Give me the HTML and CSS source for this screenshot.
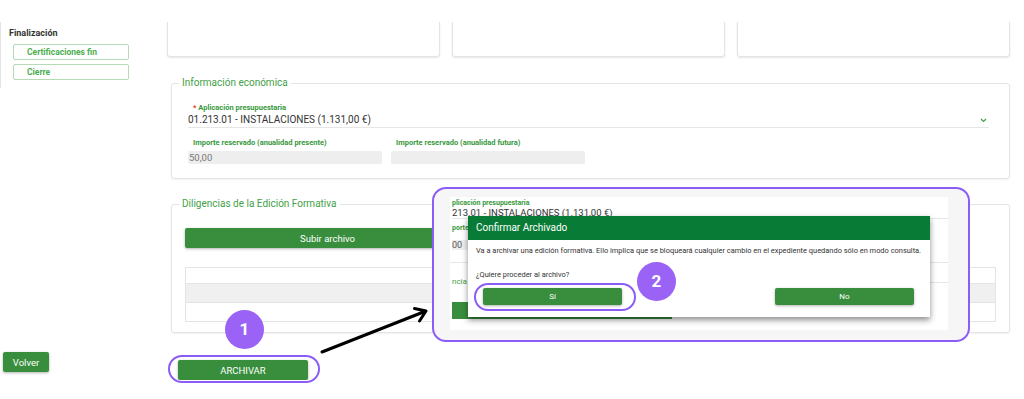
FILE: index.html
```html
<!DOCTYPE html>
<html lang="es">
<head>
    <meta charset="UTF-8">
    <meta name="viewport" content="width=device-width, initial-scale=1.0">
    <title>Archivar edición formativa</title>
    <link rel="stylesheet" href="styles.css">
</head>
<body>

<div class="page">
    <aside class="sidebar">
        <div class="side-group">
            <h4 class="side-title">Finalización</h4>
            <a class="side-link">Certificaciones fin</a>
            <a class="side-link">Cierre</a>
        </div>
        <button class="btn btn-back">Volver</button>
    </aside>

    <main class="content">
        <div class="cards">
            <div class="card"></div>
            <div class="card"></div>
            <div class="card"></div>
        </div>

        <fieldset class="panel">
            <legend>Información económica</legend>
            <div class="panel-body panel-eco">
                <div class="field">
                    <label class="field-label"><span class="req">*</span> Aplicación presupuestaria</label>
                    <div class="select-value">
                        <span>01.213.01 - INSTALACIONES (1.131,00 €)</span>
                        <svg class="chevron" width="7" height="5" viewBox="0 0 7 5"><path d="M1 1l2.5 2.5L6 1" fill="none" stroke="#43a047" stroke-width="1.2"/></svg>
                    </div>
                </div>
                <div class="field-row">
                    <div class="field">
                        <label class="field-label">Importe reservado (anualidad presente)</label>
                        <div class="input-ro">50,00</div>
                    </div>
                    <div class="field">
                        <label class="field-label">Importe reservado (anualidad futura)</label>
                        <div class="input-ro"></div>
                    </div>
                </div>
            </div>
        </fieldset>

        <fieldset class="panel">
            <legend>Diligencias de la Edición Formativa</legend>
            <div class="panel-body panel-docs">
                <button class="btn btn-upload">Subir archivo</button>
                <div class="doc-table">
                    <div class="doc-row"></div>
                    <div class="doc-row odd"></div>
                    <div class="doc-row"></div>
                </div>
            </div>
        </fieldset>

        <button class="btn btn-archive">ARCHIVAR</button>
    </main>
</div>

<!-- anotaciones del tutorial -->
<div class="zoom-box">
    <div class="shot">
        <div class="shot-block">
            <div class="shot-label">plicación presupuestaria</div>
            <div class="shot-value">213.01 - INSTALACIONES (1.131,00 €)</div>
            <div class="shot-label second">porte</div>
            <div class="shot-input">00</div>
        </div>
        <div class="shot-legend"><span>ncia</span><i></i></div>
        <div class="shot-btn"></div>
    </div>

    <div class="dialog">
        <div class="dialog-head">Confirmar Archivado</div>
        <div class="dialog-body">
            <p>Va a archivar una edición formativa. Ello implica que se bloqueará cualquier cambio en el expediente quedando sólo en modo consulta.</p>
            <p class="ask">¿Quiere proceder al archivo?</p>
            <div class="dialog-actions">
                <button class="btn btn-dialog">Sí</button>
                <button class="btn btn-dialog">No</button>
            </div>
        </div>
    </div>
</div>

<div class="ring ring-archive"></div>
<div class="ring ring-yes"></div>
<div class="step step-1">1</div>
<div class="step step-2">2</div>

<svg class="arrow" width="120" height="60" viewBox="0 0 120 60">
    <path d="M7 52L111 11M99.5 8.5L111 11L104.5 21" fill="none" stroke="#000" stroke-width="3" stroke-linecap="round" stroke-linejoin="round"/>
</svg>

</body>
</html>
```

FILE: styles.css
```css
/* Alap */
body {
    margin: 0;
    font-family: Roboto, "Liberation Sans", sans-serif;
    background-color: #fff;
    color: #333;
    overflow: hidden;
}

.page {
    display: flex;
}

button {
    font-family: inherit;
    cursor: pointer;
}

/* Menú lateral */
.sidebar {
    width: 167px;
    flex-shrink: 0;
}

.side-group {
    margin-top: 22px;
    height: 66px;
    border-left: 1px solid #e4e4e4;
    padding: 6px 0 0 8px;
    box-sizing: border-box;
}

.side-title {
    margin: 0 0 5px;
    font-size: 9px;
    line-height: 11px;
    font-weight: bold;
    color: #333;
}

.side-link {
    display: block;
    width: 116px;
    height: 16px;
    box-sizing: border-box;
    margin: 0 0 4px 4px;
    padding-left: 13px;
    border: 1px solid #b5dcb7;
    border-radius: 2px;
    font-size: 8.5px;
    line-height: 14px;
    font-weight: bold;
    color: #4caf50;
}

.btn {
    border: none;
    border-radius: 2px;
    background-color: #388e3c;
    color: #fff;
    font-size: 9.5px;
    padding: 0;
    box-shadow: 0 1px 3px rgba(0, 0, 0, 0.3);
}

.btn-back {
    display: block;
    margin: 264px 0 0 3px;
    width: 46px;
    height: 20px;
}

/* Contenido */
.content {
    width: 843px;
    padding-top: 22px;
}

.cards {
    display: grid;
    grid-template-columns: repeat(3, 1fr);
    gap: 12px;
}

.card {
    height: 34px;
    border: 1px solid #e4e4e4;
    border-top: none;
    border-radius: 0 0 3px 3px;
    box-shadow: 0 1px 2px rgba(0, 0, 0, 0.1);
}

.panel {
    margin: 20px 0 0 4px;
    padding: 0;
    min-width: 0;
    border: 1px solid #e4e4e4;
    border-radius: 3px;
    box-shadow: 0 1px 2px rgba(0, 0, 0, 0.06);
}

.panel + .panel {
    margin-top: 19px;
}

.panel legend {
    margin-left: 7px;
    padding: 0 3px;
    font-size: 10px;
    line-height: 12px;
    color: #43a047;
}

.panel-eco {
    padding: 14px 20px 14px 16px;
}

.field-label {
    display: block;
    padding-left: 5px;
    font-size: 7.5px;
    line-height: 10px;
    font-weight: bold;
    color: #37993c;
}

.req {
    color: #e53935;
}

.select-value {
    display: flex;
    justify-content: space-between;
    align-items: center;
    margin-top: 1px;
    padding-bottom: 1px;
    border-bottom: 1px solid #e6e6e6;
    font-size: 10px;
    line-height: 12px;
    color: #333;
}

.chevron {
    margin-right: 2px;
}

.field-row {
    display: flex;
    gap: 9px;
    margin-top: 10px;
}

.field-row .field {
    width: 194px;
}

.input-ro {
    margin-top: 3px;
    height: 13px;
    padding-left: 1px;
    border-radius: 2px;
    background-color: #eee;
    font-size: 9.5px;
    line-height: 13px;
    color: #777;
}

.panel-docs {
    padding: 18px 13px 10px 13px;
}

.btn-upload {
    display: block;
    width: 285px;
    height: 20px;
}

.doc-table {
    margin-top: 19px;
    border: 1px solid #e4e4e4;
}

.doc-row {
    height: 18px;
    border-top: 1px solid #e4e4e4;
}

.doc-row:first-child {
    height: 15px;
    border-top: none;
}

.doc-row.odd {
    background-color: #f0f0f0;
}

.btn-archive {
    display: block;
    margin: 27px 0 0 11px;
    width: 130px;
    height: 20px;
}

/* Anotaciones */
.zoom-box {
    position: absolute;
    left: 432px;
    top: 187px;
    width: 538px;
    height: 155px;
    box-sizing: border-box;
    border: 2px solid #8c5cf6;
    border-radius: 14px;
    background-color: #f6f6f6;
    overflow: hidden;
}

.shot {
    margin: 8px 0 0 16px;
    width: 498px;
    height: 133px;
    background-color: #fff;
}

.shot-block {
    padding: 1px 0 0 2px;
    height: 64px;
    border-bottom: 1px solid #e6e6e6;
}

.shot-label {
    font-size: 7px;
    line-height: 10px;
    font-weight: bold;
    color: #37993c;
}

.shot-label.second {
    margin-top: 4px;
}

.shot-value {
    font-size: 9.5px;
    line-height: 10px;
    color: #333;
    border-bottom: 1px solid #e6e6e6;
}

.shot-input {
    margin-top: 7px;
    width: 60px;
    height: 10px;
    background-color: #eee;
    font-size: 9px;
    line-height: 10px;
    color: #555;
}

.shot-legend {
    display: flex;
    align-items: center;
    margin-top: 14px;
    padding-left: 2px;
    font-size: 8px;
    line-height: 10px;
    color: #43a047;
}

.shot-legend i {
    flex: 1;
    margin-left: 3px;
    border-top: 1px solid #e6e6e6;
}

.shot-btn {
    margin: 15px 0 0 2px;
    width: 220px;
    height: 17px;
    background-color: #388e3c;
}

.dialog {
    position: absolute;
    left: 34px;
    top: 27px;
    width: 462px;
    height: 101px;
    background-color: #fff;
    box-shadow: 0 3px 6px rgba(0, 0, 0, 0.45);
}

.dialog-head {
    height: 24px;
    padding-left: 8px;
    background-color: #087c36;
    color: #fff;
    font-size: 10px;
    line-height: 24px;
}

.dialog-body {
    padding: 6px 16px 0 8px;
    font-size: 7.45px;
    line-height: 10px;
    color: #333;
}

.dialog-body p {
    margin: 0;
    white-space: nowrap;
}

.dialog-body .ask {
    margin-top: 14px;
}

.dialog-actions {
    display: flex;
    justify-content: space-between;
    margin: 8px 0 0 7px;
}

.btn-dialog {
    width: 139px;
    height: 17px;
    font-size: 8px;
}

.ring {
    position: absolute;
    box-sizing: border-box;
    border: 2px solid #8c5cf6;
    border-radius: 16px;
}

.ring-archive {
    left: 168px;
    top: 355px;
    width: 152px;
    height: 28px;
}

.ring-yes {
    left: 474px;
    top: 283px;
    width: 162px;
    height: 28px;
}

.step {
    position: absolute;
    width: 39px;
    height: 39px;
    border-radius: 50%;
    background-color: #9a63f6;
    color: #fff;
    font-size: 17px;
    font-weight: bold;
    line-height: 39px;
    text-align: center;
}

.step-1 {
    left: 225px;
    top: 310px;
}

.step-2 {
    left: 637px;
    top: 262px;
}

.arrow {
    position: absolute;
    left: 315px;
    top: 300px;
}
```
